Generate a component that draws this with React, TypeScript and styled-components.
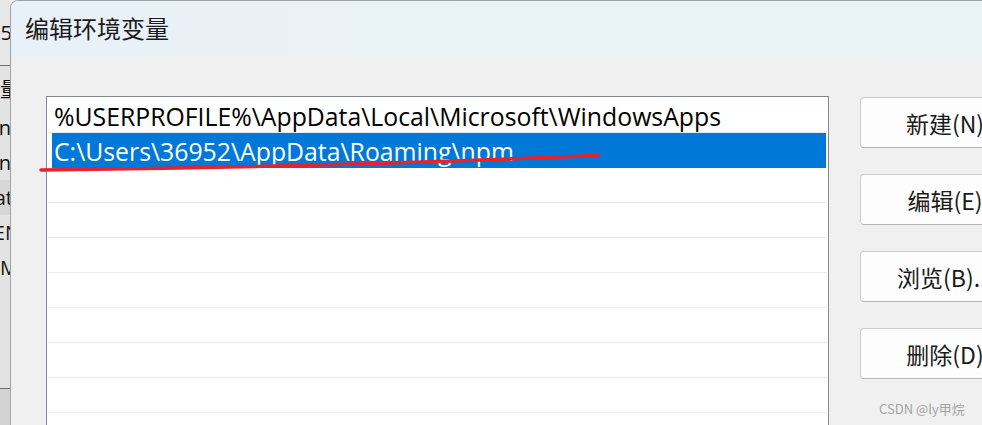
import React from "react";
import styled, { createGlobalStyle } from "styled-components";

const Global = createGlobalStyle`
  html, body { margin: 0; padding: 0; overflow: hidden; background: #f0f0f0; }
  body { font-family: "Open Sans", "Noto Sans CJK SC", sans-serif; }
`;

const Screen = styled.div`
  position: relative;
  width: 982px;
  height: 425px;
  overflow: hidden;
  display: flex;
`;

/* window behind the dialog, only a sliver visible */
const BehindStrip = styled.div`
  width: 10px;
  flex-shrink: 0;
  display: flex;
  flex-direction: column;
  background: #e3e3e3;
  font-family: "Open Sans", "Noto Sans CJK SC", sans-serif;
  font-size: 20px;
  color: #111;
`;

const StripCell = styled.div<{ $h: number; $bg?: string; $shift?: number }>`
  height: ${(p) => p.$h}px;
  flex-shrink: 0;
  display: flex;
  align-items: center;
  justify-content: flex-end;
  overflow: hidden;
  white-space: nowrap;
  background: ${(p) => p.$bg ?? "transparent"};
  & > span {
    margin-right: ${(p) => -(p.$shift ?? 0)}px;
  }
`;

const StripFill = styled.div`
  flex: 1;
`;

const StripLine = styled.div`
  height: 1px;
  flex-shrink: 0;
  background: #6c6f78;
`;

const StripBottom = styled.div`
  height: 36px;
  flex-shrink: 0;
  background: #d3d3d3;
`;

const Dialog = styled.div`
  flex: 1;
  display: flex;
  flex-direction: column;
  border-left: 1px solid #a2a2a2;
  border-top: 1px solid #a2a2a2;
  border-top-left-radius: 8px;
  background: #f0f0f0;
  overflow: hidden;
  min-width: 0;
`;

const TitleBar = styled.div`
  height: 56px;
  flex-shrink: 0;
  display: flex;
  align-items: center;
  padding-left: 14px;
  background: linear-gradient(90deg, #e9f1f8 0%, #e9f3f6 100%);
`;

const Title = styled.span`
  font-family: "Noto Sans CJK SC", sans-serif;
  font-size: 24px;
  color: #1b1b1b;
  margin-top: -4px;
`;

const Body = styled.div`
  display: flex;
  gap: 31px;
  padding: 39px 0 0 35px;
`;

const ListBox = styled.div`
  width: 783px;
  height: 420px;
  flex-shrink: 0;
  box-sizing: border-box;
  border: 1px solid #848891;
  background: #fff;
  padding: 1px 1px 0 1px;
  display: flex;
  flex-direction: column;
`;

const Row = styled.div`
  height: 35px;
  flex-shrink: 0;
  box-sizing: border-box;
  border-bottom: 1px solid #ebebeb;
  display: flex;
  padding: 0 1px 0 4px;
`;

const RowInner = styled.div<{ $selected?: boolean }>`
  flex: 1;
  display: flex;
  align-items: center;
  padding-left: 2px;
  background: ${(p) => (p.$selected ? "#0078d7" : "transparent")};
  color: ${(p) => (p.$selected ? "#fff" : "#000")};
  font-family: "Open Sans", "Noto Sans CJK SC", sans-serif;
  font-size: 24.8px;
  white-space: nowrap;
  margin-bottom: -1px;
`;

const ButtonColumn = styled.div`
  display: flex;
  flex-direction: column;
  gap: 26px;
  margin-top: 1px;
`;

const Button = styled.button`
  width: 170px;
  height: 51px;
  flex-shrink: 0;
  box-sizing: border-box;
  border: 1px solid #cccccc;
  border-bottom-color: #b5b5b5;
  border-radius: 4px;
  background: #fdfdfd;
  font-family: "Noto Sans CJK SC", sans-serif;
  font-size: 23px;
  color: #1a1a1a;
  padding: 0;
  white-space: nowrap;
`;

const Scribble = styled.svg`
  position: absolute;
  left: 0;
  top: 0;
  pointer-events: none;
`;

const Watermark = styled.div`
  position: absolute;
  left: 879px;
  top: 399px;
  font-family: "Noto Sans CJK SC", sans-serif;
  font-size: 13px;
  color: #a3a3a3;
  white-space: nowrap;
`;

const rows = [
  { text: "%USERPROFILE%\\AppData\\Local\\Microsoft\\WindowsApps" },
  { text: "C:\\Users\\36952\\AppData\\Roaming\\npm", selected: true },
  { text: "" },
  { text: "" },
  { text: "" },
  { text: "" },
  { text: "" },
  { text: "" },
  { text: "" },
  { text: "" },
];

const buttons = ["新建(N)", "编辑(E)", "浏览(B)...", "删除(D)"];

export default function App() {
  return (
    <>
      <Global />
      <Screen>
        <BehindStrip>
          <StripCell $h={65} $bg="#e8e8e8" $shift={2}>
            <span>5</span>
          </StripCell>
          <StripLine />
          <StripCell $h={44} $shift={10}>
            <span>量</span>
          </StripCell>
          <StripCell $h={35} $shift={1}>
            <span>n</span>
          </StripCell>
          <StripCell $h={35} $shift={1}>
            <span>n</span>
          </StripCell>
          <StripCell $h={35} $bg="#d7d7d7" $shift={3}>
            <span>at</span>
          </StripCell>
          <StripCell $h={35} $shift={10}>
            <span>EN</span>
          </StripCell>
          <StripCell $h={35} $shift={8}>
            <span>M</span>
          </StripCell>
          <StripFill />
          <StripLine />
          <StripBottom />
        </BehindStrip>
        <Dialog>
          <TitleBar>
            <Title>编辑环境变量</Title>
          </TitleBar>
          <Body>
            <ListBox>
              {rows.map((r, i) => (
                <Row key={i}>
                  <RowInner $selected={r.selected}>{r.text}</RowInner>
                </Row>
              ))}
            </ListBox>
            <ButtonColumn>
              {buttons.map((b) => (
                <Button key={b}>{b}</Button>
              ))}
            </ButtonColumn>
          </Body>
        </Dialog>
        <Scribble width="982" height="425" viewBox="0 0 982 425">
          <path
            d="M41 170 Q 330 167 598 155.5"
            stroke="#e8212d"
            strokeWidth="3.5"
            strokeLinecap="round"
            fill="none"
          />
        </Scribble>
        <Watermark>CSDN @ly甲烷</Watermark>
      </Screen>
    </>
  );
}
